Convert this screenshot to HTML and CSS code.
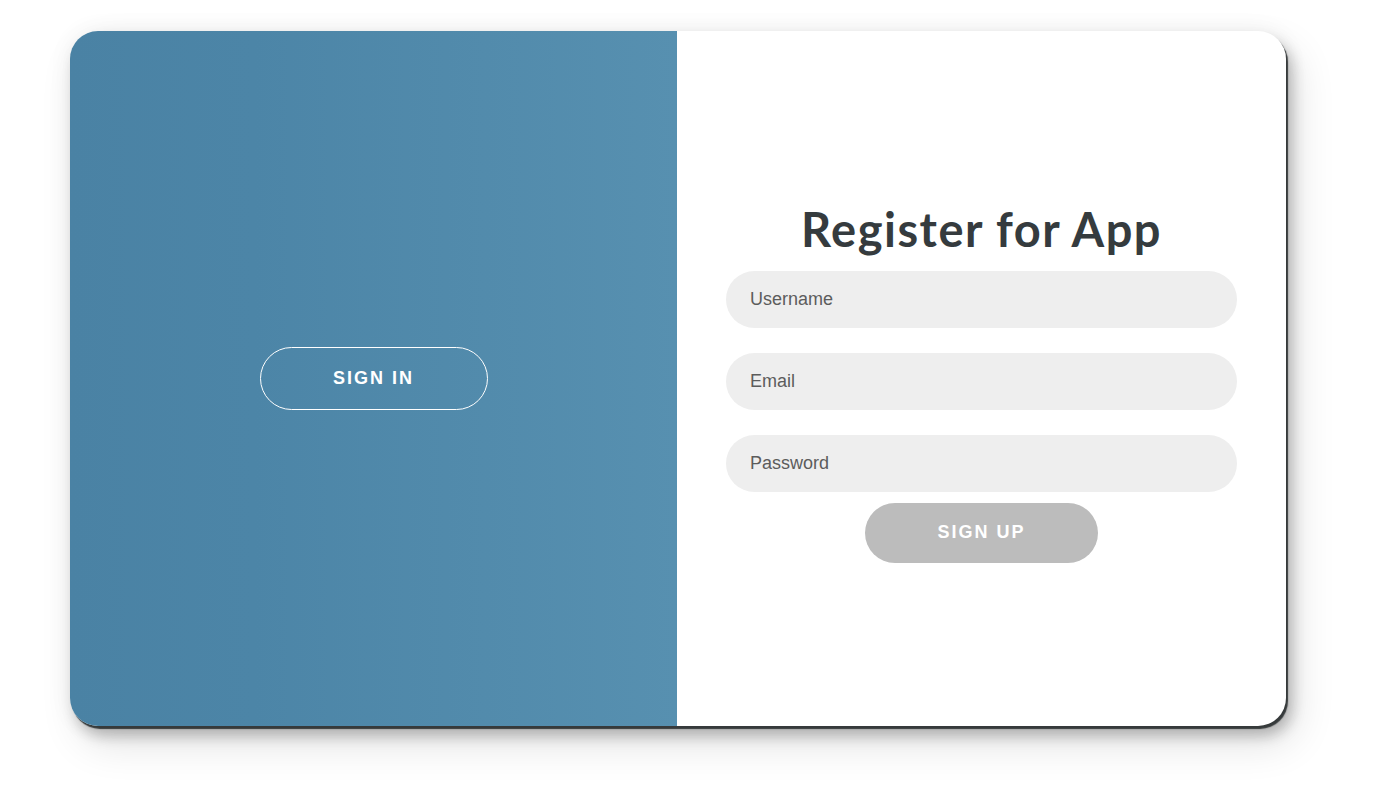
FILE: index.html
```html
<!DOCTYPE html>
<html>
<head>
<meta charset="utf-8">
<link rel="stylesheet" href="styles.css">
</head>
<body>
<div class="page">
  <div class="card">
    <div class="overlay">
      <button class="ghost">SIGN IN</button>
    </div>
    <div class="form-side">
      <h1 class="title">Register for App</h1>
      <div class="field"><span class="ph">Username</span></div>
      <div class="field"><span class="ph">Email</span></div>
      <div class="field"><span class="ph">Password</span></div>
      <button class="submit">SIGN UP</button>
    </div>
  </div>
</div>
</body>
</html>
```

FILE: styles.css
```css
html, body {
  margin: 0;
  padding: 0;
  background: #ffffff;
}
.page {
  padding: 31px 0 0 70px;
  width: 1400px;
  height: 789px;
  box-sizing: border-box;
}
.card {
  width: 1216px;
  height: 695px;
  border-radius: 28px;
  background: #ffffff;
  display: flex;
  overflow: hidden;
  box-shadow: 2px 3px 1px rgba(40, 44, 46, 0.9),
              6px 10px 14px rgba(0, 0, 0, 0.22),
              10px 18px 40px rgba(0, 0, 0, 0.12),
              0 0 24px rgba(0, 0, 0, 0.06);
}
.overlay {
  width: 607px;
  flex: 0 0 607px;
  background: linear-gradient(to right, #4a82a4 0%, #4c85a7 30%, #5790b0 100%);
  display: flex;
  align-items: center;
  justify-content: center;
}
.ghost {
  width: 228px;
  height: 63px;
  border: 1.5px solid #ffffff;
  border-radius: 32px;
  background: transparent;
  color: #ffffff;
  font-family: "Liberation Sans", Arial, sans-serif;
  font-weight: 700;
  font-size: 18px;
  letter-spacing: 2px;
  padding: 0;
}
.form-side {
  flex: 1;
  display: flex;
  flex-direction: column;
  align-items: center;
  justify-content: center;
  padding-top: 6px;
}
.title {
  margin: 0 0 14px 0;
  font-family: Lato, "Open Sans", sans-serif;
  font-weight: 700;
  font-size: 47px;
  line-height: 56px;
  color: #353b3e;
  letter-spacing: 1.5px;
}
.field {
  width: 511px;
  height: 57px;
  border-radius: 29px;
  background: #eeeeee;
  display: flex;
  align-items: center;
  padding-left: 24px;
  box-sizing: border-box;
  margin-bottom: 25px;
}
.field:nth-of-type(3) {
  margin-bottom: 11px;
}
.ph {
  font-family: "Liberation Sans", Arial, sans-serif;
  font-size: 18px;
  color: #5c5c5c;
}
.submit {
  width: 233px;
  height: 60px;
  border: none;
  border-radius: 30px;
  background: #bcbcbc;
  color: #ffffff;
  font-family: "Liberation Sans", Arial, sans-serif;
  font-weight: 700;
  font-size: 18px;
  letter-spacing: 2px;
  padding: 0;
}
```
